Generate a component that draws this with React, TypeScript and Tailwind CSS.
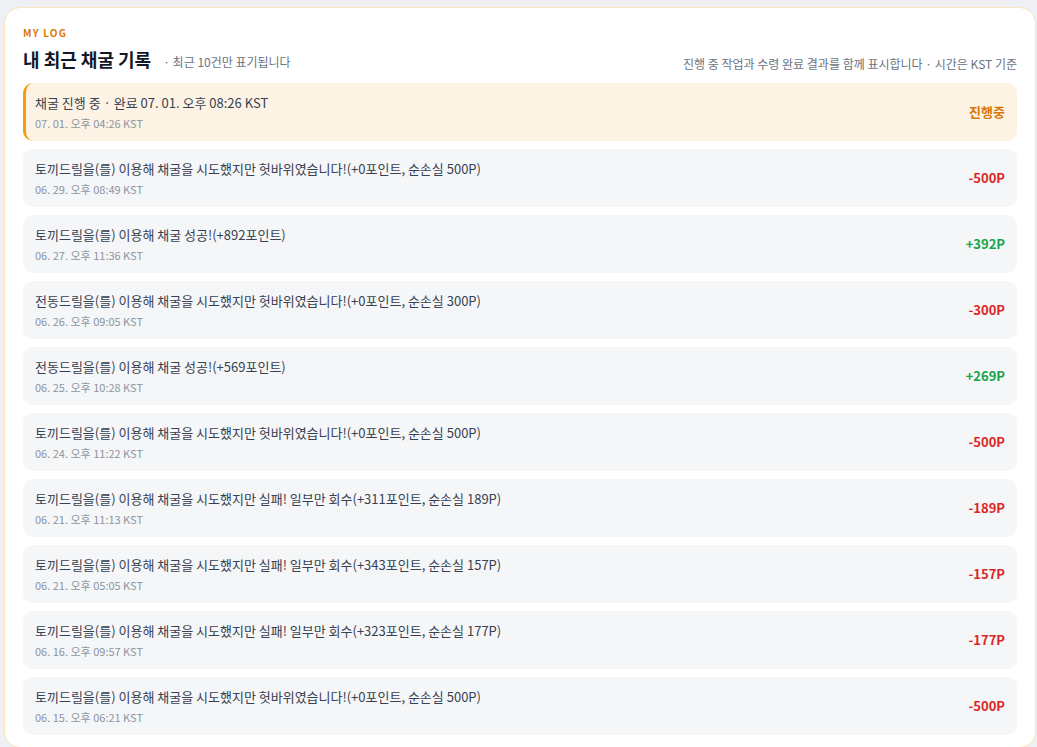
import React from 'react';

type Entry = {
  title: string;
  time: string;
  amount: string;
  kind: 'loss' | 'gain';
};

const entries: Entry[] = [
  { title: '토끼드릴을(를) 이용해 채굴을 시도했지만 헛바위였습니다!(+0포인트, 순손실 500P)', time: '06. 29. 오후 08:49 KST', amount: '-500P', kind: 'loss' },
  { title: '토끼드릴을(를) 이용해 채굴 성공!(+892포인트)', time: '06. 27. 오후 11:36 KST', amount: '+392P', kind: 'gain' },
  { title: '전동드릴을(를) 이용해 채굴을 시도했지만 헛바위였습니다!(+0포인트, 순손실 300P)', time: '06. 26. 오후 09:05 KST', amount: '-300P', kind: 'loss' },
  { title: '전동드릴을(를) 이용해 채굴 성공!(+569포인트)', time: '06. 25. 오후 10:28 KST', amount: '+269P', kind: 'gain' },
  { title: '토끼드릴을(를) 이용해 채굴을 시도했지만 헛바위였습니다!(+0포인트, 순손실 500P)', time: '06. 24. 오후 11:22 KST', amount: '-500P', kind: 'loss' },
  { title: '토끼드릴을(를) 이용해 채굴을 시도했지만 실패! 일부만 회수(+311포인트, 순손실 189P)', time: '06. 21. 오후 11:13 KST', amount: '-189P', kind: 'loss' },
  { title: '토끼드릴을(를) 이용해 채굴을 시도했지만 실패! 일부만 회수(+343포인트, 순손실 157P)', time: '06. 21. 오후 05:05 KST', amount: '-157P', kind: 'loss' },
  { title: '토끼드릴을(를) 이용해 채굴을 시도했지만 실패! 일부만 회수(+323포인트, 순손실 177P)', time: '06. 16. 오후 09:57 KST', amount: '-177P', kind: 'loss' },
  { title: '토끼드릴을(를) 이용해 채굴을 시도했지만 헛바위였습니다!(+0포인트, 순손실 500P)', time: '06. 15. 오후 06:21 KST', amount: '-500P', kind: 'loss' },
];

export default function App() {
  return (
    <div
      className="min-h-screen bg-[#eef0f3] pt-[7px] pl-[4px] pr-px"
      style={{ fontFamily: '"Noto Sans CJK KR", "Noto Sans", sans-serif' }}
    >
      <section className="rounded-[16px] border border-[#fde3bd] bg-white px-[18px] pt-[20px] pb-[12px]">
        {/* Header */}
        <div className="text-[10px] font-bold tracking-[0.12em] text-[#d97706] leading-none">MY LOG</div>
        <div className="mt-[7px] mb-[10px] flex items-end justify-between">
          <div className="flex items-baseline gap-[12px]">
            <h2 className="text-[18px] font-bold text-[#111827] leading-[28px]">내 최근 채굴 기록</h2>
            <span className="text-[12px] text-[#6b7280]">· 최근 10건만 표기됩니다</span>
          </div>
          <p className="text-[12px] text-[#6b7280]">
            진행 중 작업과 수령 완료 결과를 함께 표시합니다 · 시간은 KST 기준
          </p>
        </div>

        {/* Log rows */}
        <div className="flex flex-col gap-[8px]">
          <div className="flex h-[58px] items-center justify-between rounded-[10px] border-l-[3px] border-[#f59e0b] bg-[#fdf3e4] pl-[9px] pr-[12px]">
            <div className="flex flex-col">
              <span className="text-[13px] leading-[18px] text-[#374151]">채굴 진행 중 · 완료 07. 01. 오후 08:26 KST</span>
              <span className="mt-[4px] text-[11px] leading-[14px] text-[#8b95a3]">07. 01. 오후 04:26 KST</span>
            </div>
            <span className="text-[13px] font-bold text-[#d97706]">진행중</span>
          </div>

          {entries.map((e, i) => (
            <div
              key={i}
              className="flex h-[58px] items-center justify-between rounded-[10px] bg-[#f5f6f8] pl-[12px] pr-[12px]"
            >
              <div className="flex flex-col">
                <span className="text-[13px] leading-[18px] text-[#374151]">{e.title}</span>
                <span className="mt-[4px] text-[11px] leading-[14px] text-[#8b95a3]">{e.time}</span>
              </div>
              <span
                className={`text-[13px] font-bold ${e.kind === 'gain' ? 'text-[#16a34a]' : 'text-[#dc2626]'}`}
              >
                {e.amount}
              </span>
            </div>
          ))}
        </div>
      </section>
    </div>
  );
}
